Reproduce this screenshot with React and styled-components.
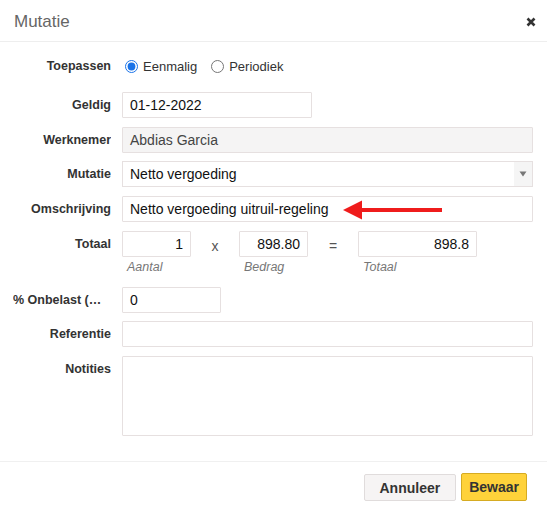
import React from "react";
import styled, { createGlobalStyle } from "styled-components";

const Global = createGlobalStyle`
  html, body { margin: 0; padding: 0; background: #fff; }
  body { font-family: "Liberation Sans", Arial, sans-serif; color: #333; }
  * { box-sizing: border-box; }
`;

const Modal = styled.div`
  width: 547px;
  height: 517px;
  background: #fff;
  display: flex;
  flex-direction: column;
`;

const Header = styled.div`
  height: 42px;
  flex: none;
  border-bottom: 1px solid #eeeeee;
  display: flex;
  align-items: center;
  justify-content: space-between;
  padding: 2px 10px 0 14px;
`;

const Title = styled.div`
  font-size: 17px;
  color: #666;
`;

const Close = styled.button`
  border: 0;
  background: none;
  padding: 0;
  width: 12px;
  height: 12px;
  display: flex;
  align-items: center;
  justify-content: center;
  cursor: pointer;
`;

const Body = styled.div`
  flex: none;
  padding: 11px 14px 0 14px;
  display: flex;
  flex-direction: column;
  gap: 8.75px;
  height: 420px;
  border-bottom: 1px solid #f0f0f0;
`;

const Row = styled.div`
  display: grid;
  grid-template-columns: 97px 1fr;
  column-gap: 11px;
  align-items: start;
  margin-bottom: ${(p) => p.$mb || 0}px;
`;

const Label = styled.div`
  text-align: ${(p) => (p.$left ? "left" : "right")};
  font-weight: bold;
  font-size: 12.5px;
  line-height: 26px;
  color: #333;
  white-space: nowrap;
  overflow: hidden;
  margin-left: ${(p) => (p.$left ? -1 : 0)}px;
`;

const Input = styled.div`
  height: 26px;
  width: ${(p) => p.$w || "100%"};
  border: 1px solid #e6e0e0;
  border-radius: 1px;
  background: ${(p) => (p.$disabled ? "#f5f4f4" : "#fff")};
  font-size: 14px;
  line-height: 24px;
  color: ${(p) => (p.$disabled ? "#444" : "#111")};
  padding: 0 7px;
  text-align: ${(p) => (p.$right ? "right" : "left")};
  white-space: nowrap;
  overflow: hidden;
`;

const Textarea = styled(Input)`
  height: 80px;
`;

const SelectBox = styled.div`
  height: 26px;
  border: 1px solid #e6e0e0;
  display: flex;
  align-items: stretch;
  font-size: 14px;
  color: #111;
`;

const SelectValue = styled.div`
  flex: 1;
  padding: 0 7px;
  line-height: 24px;
`;

const SelectArrow = styled.div`
  width: 18px;
  background: #f5f5f5;
  display: flex;
  align-items: center;
  justify-content: center;
`;

const Radios = styled.div`
  display: flex;
  align-items: center;
  height: 26px;
  gap: 11px;
  font-size: 13px;
  color: #333;
`;

const RadioLabel = styled.label`
  display: flex;
  align-items: center;
  gap: 5px;
  input {
    margin: 0 0 0 3px;
    width: 13px;
    height: 13px;
    accent-color: #1a73e8;
  }
`;

const OmschWrap = styled.div`
  position: relative;
`;

const Arrow = styled.svg`
  position: absolute;
  left: 221px;
  top: 4px;
`;

const TotalRow = styled.div`
  display: flex;
  align-items: flex-start;
`;

const TotalCell = styled.div`
  display: flex;
  flex-direction: column;
  width: ${(p) => p.$w}px;
`;

const Op = styled.div`
  width: ${(p) => p.$w}px;
  text-align: center;
  line-height: 30px;
  font-size: 14px;
  color: #555;
`;

const Sub = styled.div`
  font-style: italic;
  font-size: 12.5px;
  color: #777;
  padding-left: 5px;
  line-height: 21px;
`;

const Footer = styled.div`
  display: flex;
  justify-content: flex-end;
  align-items: flex-start;
  gap: 5px;
  padding: 11px 20px 0 0;
`;

const Button = styled.button`
  font-family: "Liberation Sans", Arial, sans-serif;
  font-weight: bold;
  font-size: 14px;
  color: #333;
  border-radius: 2px;
  padding: 0 ${(p) => (p.$primary ? 7 : 15)}px;
  margin-top: ${(p) => (p.$primary ? 0 : 1)}px;
  height: ${(p) => (p.$primary ? 28 : 27)}px;
  background: ${(p) => (p.$primary ? "#ffd23a" : "#f6f4f4")};
  border: 1px solid ${(p) => (p.$primary ? "#d6ab22" : "#e0dcdc")};
  cursor: pointer;
`;

export default function App() {
  return (
    <Modal>
      <Global />
      <Header>
        <Title>Mutatie</Title>
        <Close aria-label="close">
          <svg width="10" height="10" viewBox="0 0 10 10">
            <path d="M1.5 1.5 L8.5 8.5 M8.5 1.5 L1.5 8.5" stroke="#333" strokeWidth="2.6" strokeLinecap="butt" />
          </svg>
        </Close>
      </Header>
      <Body>
        <Row $mb={4}>
          <Label>Toepassen</Label>
          <Radios>
            <RadioLabel>
              <input type="radio" name="t" defaultChecked />
              Eenmalig
            </RadioLabel>
            <RadioLabel>
              <input type="radio" name="t" />
              Periodiek
            </RadioLabel>
          </Radios>
        </Row>
        <Row>
          <Label>Geldig</Label>
          <Input $w="190px">01-12-2022</Input>
        </Row>
        <Row>
          <Label>Werknemer</Label>
          <Input $disabled>Abdias Garcia</Input>
        </Row>
        <Row>
          <Label>Mutatie</Label>
          <SelectBox>
            <SelectValue>Netto vergoeding</SelectValue>
            <SelectArrow>
              <svg width="8" height="6" viewBox="0 0 8 6">
                <path d="M0.5 0.5 L7.5 0.5 L4 5.5 Z" fill="#777" />
              </svg>
            </SelectArrow>
          </SelectBox>
        </Row>
        <Row>
          <Label>Omschrijving</Label>
          <OmschWrap>
            <Input>Netto vergoeding uitruil-regeling</Input>
            <Arrow width="100" height="20" viewBox="0 0 100 20">
              <path d="M0 10 L19 0.5 L19 19.5 Z" fill="#ef1c1c" />
              <rect x="18" y="8" width="81" height="4" fill="#ef1c1c" />
            </Arrow>
          </OmschWrap>
        </Row>
        <Row>
          <Label>Totaal</Label>
          <TotalRow>
            <TotalCell $w={69}>
              <Input $right>1</Input>
              <Sub>Aantal</Sub>
            </TotalCell>
            <Op $w={48}>x</Op>
            <TotalCell $w={69}>
              <Input $right>898.80</Input>
              <Sub>Bedrag</Sub>
            </TotalCell>
            <Op $w={50}>=</Op>
            <TotalCell $w={119}>
              <Input $right>898.8</Input>
              <Sub>Totaal</Sub>
            </TotalCell>
          </TotalRow>
        </Row>
        <Row>
          <Label $left>% Onbelast (…</Label>
          <Input $w="99px">0</Input>
        </Row>
        <Row>
          <Label>Referentie</Label>
          <Input />
        </Row>
        <Row>
          <Label>Notities</Label>
          <Textarea />
        </Row>
      </Body>
      <Footer>
        <Button>Annuleer</Button>
        <Button $primary>Bewaar</Button>
      </Footer>
    </Modal>
  );
}
